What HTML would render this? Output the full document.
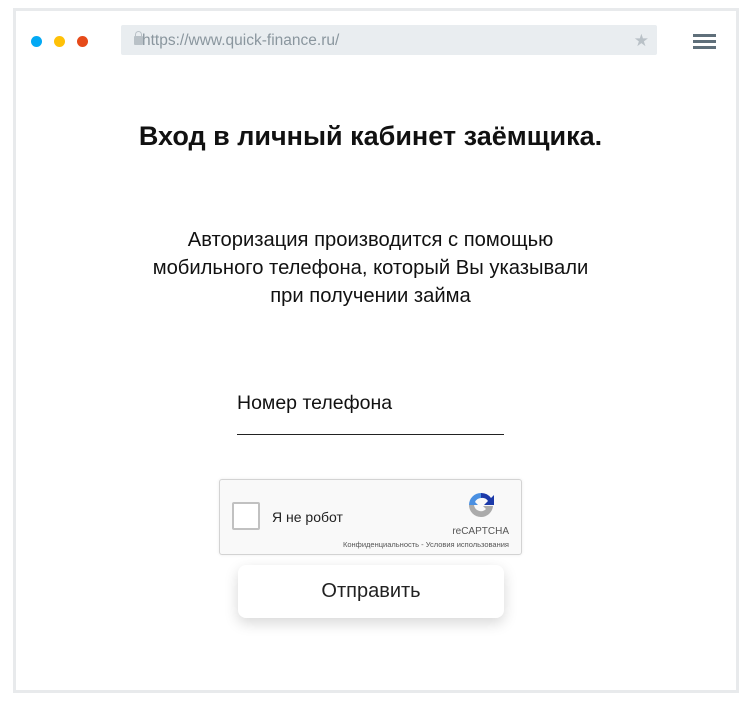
<!DOCTYPE html>
<html><head><meta charset="utf-8"><style>
body{margin:0;width:751px;height:709px;background:#fff;font-family:"Liberation Sans","DejaVu Sans",sans-serif;position:relative;overflow:hidden}
.frame{position:absolute;left:13px;top:8px;width:720px;height:679px;border:3px solid #e8eaec}
.dot{position:absolute;top:36px;width:11px;height:11px;border-radius:50%}
.url{position:absolute;left:121px;top:25px;width:536px;height:30px;background:#e9edf0;border-radius:2px;color:#8a969e;font-size:15.5px;line-height:32px}
.ham{position:absolute;left:693px;width:23px;height:3px;background:#5f6f7a}
.t{position:absolute;left:0;width:741px;text-align:center;color:#111}
</style></head><body>
<div class="frame"></div>
<div class="dot" style="left:31px;background:#03a9f4"></div>
<div class="dot" style="left:54px;background:#ffc107"></div>
<div class="dot" style="left:77px;background:#e64a19"></div>
<div class="url"><span style="position:absolute;left:13px;top:11px;width:9px;height:9px;background:#b9c1c7;border-radius:1px"></span><span style="position:absolute;left:14px;top:6px;width:5px;height:6px;border:1px solid #b9c1c7;border-radius:4px 4px 0 0"></span><span style="position:absolute;left:21px">https://www.quick-finance.ru/</span><span style="position:absolute;right:8px;color:#b9c1c7;font-size:17px">★</span></div>
<div class="ham" style="top:34px"></div><div class="ham" style="top:40px"></div><div class="ham" style="top:46px"></div>
<div class="t" style="top:121px;font-size:27px;font-weight:bold">Вход в личный кабинет заёмщика.</div>
<div class="t" style="top:226px;font-size:20.2px;line-height:28px">Авторизация производится с помощью<br>мобильного телефона, который Вы указывали<br>при получении займа</div>
<div style="position:absolute;left:237px;top:392px;font-size:19.5px;color:#111">Номер телефона</div>
<div style="position:absolute;left:237px;top:434px;width:267px;height:1px;background:#222"></div>
<div style="position:absolute;left:219px;top:479px;width:301px;height:74px;border:1px solid #d3d3d3;border-radius:3px;background:#f9f9f9;box-shadow:0 0 3px rgba(0,0,0,.08)">
<div style="position:absolute;left:12px;top:22px;width:24px;height:24px;border:2px solid #c1c1c1;border-radius:2px;background:#fff"></div>
<div style="position:absolute;left:52px;top:29px;font-size:14px;color:#222">Я не робот</div>
<svg style="position:absolute;left:245px;top:9px" width="32" height="32" viewBox="0 0 32 32"><path d="M16 4a12 12 0 0 1 10 5l3-3v10H19l4-4a7 7 0 0 0-7-3z" fill="#1c3aa9"/><path d="M4 16A12 12 0 0 1 16 4v5a7 7 0 0 0-6 4l3 3H3z" fill="#4a90e2"/><path d="M16 28a12 12 0 0 1-12-12h5a7 7 0 0 0 12 4l-3-3h10a12 12 0 0 1-12 11z" fill="#ababab"/></svg>
<div style="position:absolute;right:12px;top:46px;font-size:10px;color:#555">reCAPTCHA</div>
<div style="position:absolute;right:12px;top:60px;font-size:7.5px;color:#555">Конфиденциальность - Условия использования</div>
</div>
<div style="position:absolute;left:238px;top:565px;width:266px;height:53px;background:#fff;border-radius:8px;box-shadow:0 5px 14px rgba(0,0,0,.16);text-align:center;line-height:53px;font-size:20px;color:#222">Отправить</div>
</body></html>
